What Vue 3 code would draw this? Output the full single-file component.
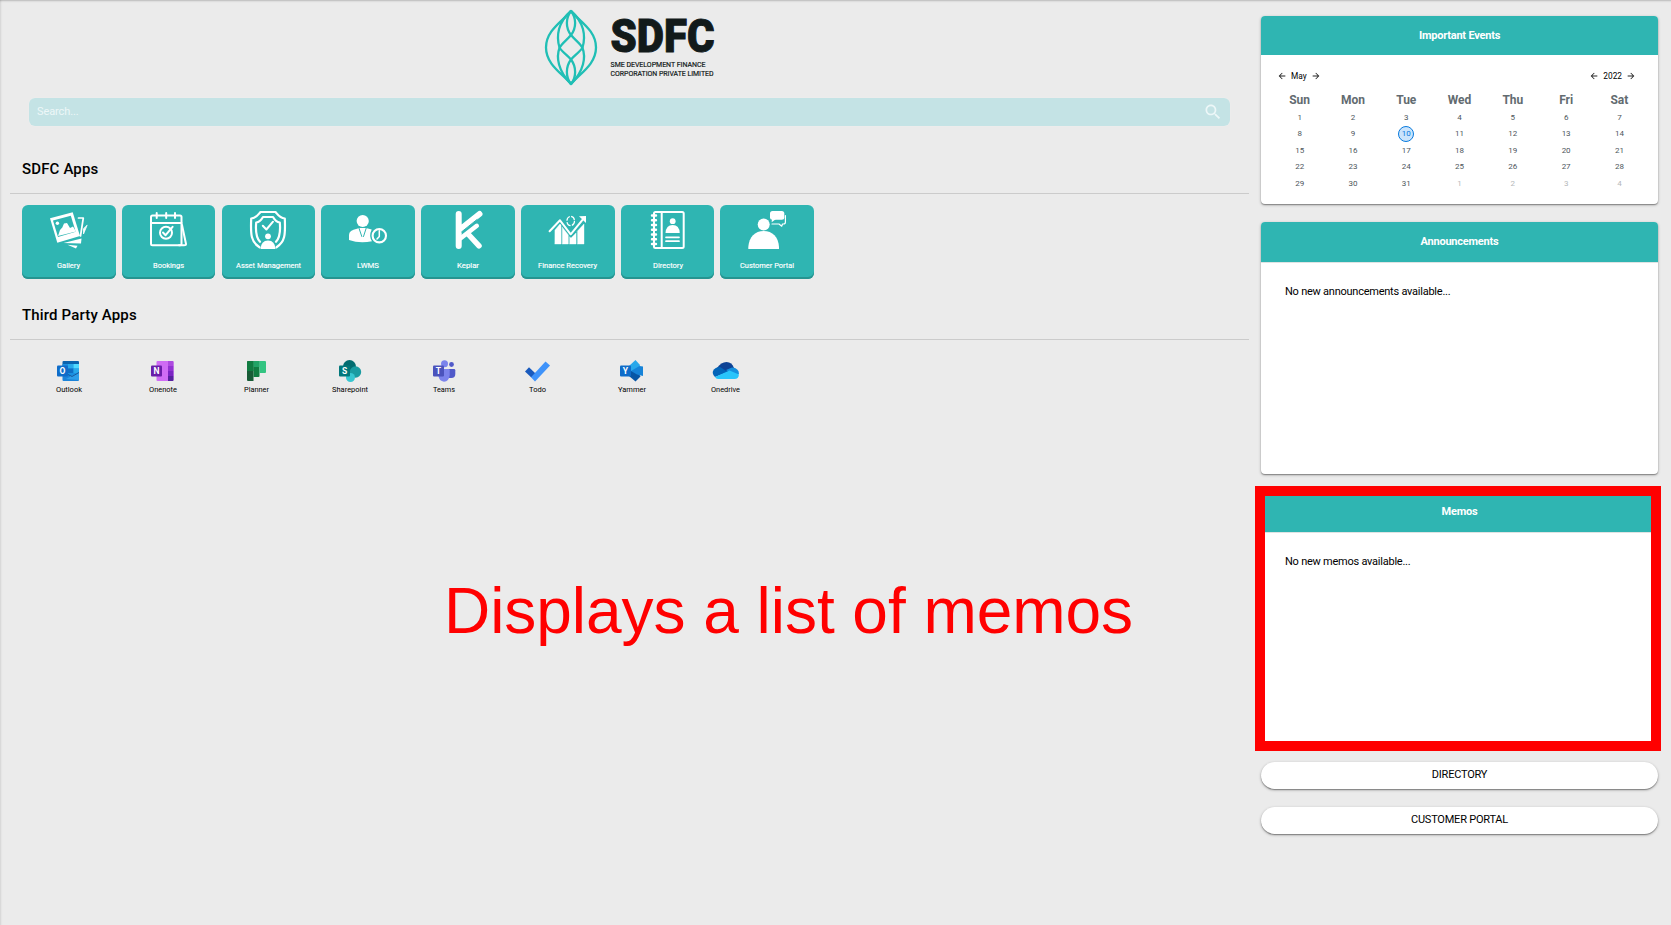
<script setup>
const apps = [
  { name: 'Gallery', w: 23, art: '<path d="M29.500 8H34.300L31.500 26" stroke-width="1.700"/><path d="M38 15.500 34.500 24V19Z" fill="#fff" stroke-width=".8"/><path d="M14.500 33 32.500 28.500 32 33.500Z" fill="#fff" stroke="none"/><path d="M18.500 34.800 28.500 35.800 27 38.600Z" fill="#fff" stroke="none"/><path d="M1 8.300 23.700 2.300 31 26 8.300 32.700Z" fill="#fff" stroke="none"/><path d="M4 10.500 21.800 5.700 26.700 21.800 9 27Z" fill="#2fb5b2" stroke="none"/><circle cx="8.400" cy="13.300" r="1.700" fill="#fff" stroke="none"/><path d="M9 26 11 20 13.300 17.500 15 13.500 18 13 21 18 24 16.500 27 21.500Z" fill="#fff" stroke="none"/>' },
  { name: 'Bookings', w: 31, art: '<rect x="2" y="5.500" width="30.500" height="29.700" rx="1.500"/><path d="M2 13H32.500M7.700 3V8M17.200 3V8M26 3V8M33 15 37 34Q37 35.200 35 35.200H30" /><circle cx="17" cy="22.700" r="6"/><path d="m14 22.500 2.600 2.700 7-8.400"/>' },
  { name: 'Asset Management', w: 65, art: '<path d="M11.500 37.300C3 32 2.500 25 3.200 8.500 8.500 8 9.500 5.500 12.500 2H27.500C30.500 5.500 31.500 8 36.800 8.500 37.500 25 37 32 28.500 37.300" stroke-width="2.200"/><path d="M12 31.800C7.500 27 7.500 20 8.200 12.500 11.500 12 13 10.500 15 7H25C27 10.500 28.500 12 31.800 12.500 32.500 20 32.500 27 28 31.800" stroke-width="2.200"/><path d="m14.800 15.700 3.600 3.800 6.600-7.800"/><circle cx="20" cy="26.300" r="2.900" fill="#fff" stroke="none"/><path d="M12.500 39Q13 30.500 20 30.500T27.500 39Z" fill="#fff" stroke="none"/>' },
  { name: 'LWMS', w: 22, art: '<circle cx="14.700" cy="11" r="6.100" fill="#fff" stroke="none"/><path d="M1 30V25Q1 20 9 18.700L11 18H18L23.700 19.500Q20.500 26 24 31.200 12 34 1 30Z" fill="#fff" stroke="none"/><path d="m11 18.200 2.800 8.300M18.200 18.200l-2.700 8.300" stroke="#2fb5b2" stroke-width="1"/><circle cx="31.300" cy="25.700" r="6.700" stroke-width="2.100"/><path d="M31.300 20.800V26.500L29 29" stroke-width="1.500"/>' },
  { name: 'Keplar', w: 22, art: '<path d="M10.700 4V36M31.500 4 12 19.500" stroke-width="6"/><path d="M28.800 15.800 13 28" stroke-width="4.500"/><path d="M20.500 24.500 31 35.800" stroke-width="5.500"/><path d="M13.700 21.800 29 9.500" stroke="#2fb5b2" stroke-width="1"/>' },
  { name: 'Finance Recovery', w: 59, art: '<path d="M7 20 12 14 13 15V34H7ZM14.300 17.200 20.300 25V34H14.300ZM21.700 27 23 28 28 23V34H21.700ZM29.500 21 36 14V34H29.500Z" fill="#fff" stroke="#fff" stroke-width=".4"/><path d="m1.600 21.300 10.400-11 10.700 14L35.500 8.700" stroke-width="2"/><path d="M31 6.200 38 6v7Z" fill="#fff" stroke="none"/><ellipse cx="22.700" cy="11" rx="3.800" ry="4.600" stroke-width="1.200" stroke-linecap="butt" stroke-dasharray="5.200 1.400"/>' },
  { name: 'Directory', w: 30, art: '<rect x="6" y="2" width="29.700" height="36" rx="1.500"/><path d="M13.700 2V38"/><path d="M4 5.500H8M4 10.200H8M4 15H8M4 19.700H8M4 24.500H8M4 29.200H8M4 34H8" stroke-width="2.400"/><circle cx="24.700" cy="11.200" r="2.900" fill="#fff" stroke="none"/><path d="M17.500 23Q18 15 24.700 15T31.700 23Z" fill="#fff" stroke="none"/><path d="M18 27.300H31M18 31.200H31" stroke-width="1.700"/>' },
  { name: 'Customer Portal', w: 54, art: '<circle cx="16.700" cy="14.600" r="6" fill="#fff" stroke="none"/><path d="M1.300 39V37C2 27 8 21 16.700 21S31.500 27 32 37V39Z" fill="#fff" stroke="none"/><rect x="23" y="1" width="14.300" height="8.800" rx="2.500" fill="#fff" stroke="none"/><path d="M25 8 24.700 12.200 29 9Z" fill="#fff" stroke="none"/><path d="M38.400 5.500V12Q38.400 14 36.500 14H35.500L34.700 16.200 32 14H25" stroke-width="1.200"/>' }
]

const thirdParty = [
  { name: 'Outlook', w: 26, art: '<rect x="5.500" y="1" width="16.500" height="12" rx="1" fill="#0a62ad"/><path d="M5.500 4H22V16H5.500Z" fill="#1a8fe0"/><path d="M11 4h5.500v4.500H11Z" fill="#28a8ea"/><path d="M16.500 4H22v4.500h-5.500Z" fill="#50d9ff"/><path d="M11 8.500h5.500V13H11Z" fill="#0f6fc5"/><path d="M16.500 8.500H22V13h-5.500Z" fill="#28a8ea"/><path d="M5.500 12 14 16.500 22 12V20q0 1-1 1H6.500Q5.500 21 5.500 20Z" fill="#1c83d9"/><path d="M22 12 9 19l13 1Z" fill="#2d9ee9"/><path d="m11 14.500 4 2 7-4" fill="none" stroke="#114a8b" stroke-width=".8"/><rect y="5.500" width="11" height="11" rx="1" fill="#0f6cc9"/>', letter: 'O' },
  { name: 'Onenote', w: 28, art: '<rect x="5.500" y="1" width="17" height="20" rx="1" fill="#cf6cf4"/><path d="M17 1h4.500q1 0 1 1v4H17Z" fill="#ad4be0"/><path d="M17 6h5.500v5H17Z" fill="#9332d2"/><path d="M17 11h5.500v5H17Z" fill="#7b24c4"/><path d="M17 16h5.500v4q0 1-1 1H17Z" fill="#56219f"/><rect y="5.500" width="11" height="11" rx="1" fill="#6a1ea9"/>', letter: 'N' },
  { name: 'Planner', w: 25, art: '<path d="M2 2q0-1 1-1h5.500v20H3q-1 0-1-1Z" fill="#185c37"/><path d="M3 1h5.500v10H2V2Z" fill="#107c41"/><path d="M8.500 1h6V16q0 1-1 1h-5Z" fill="#107c41"/><path d="M8.500 1h6v6h-6Z" fill="#21a366"/><path d="M14.500 1h5.500q1 0 1 1V12q0 1-1 1h-5.500Z" fill="#33c481"/>' },
  { name: 'Sharepoint', w: 36, art: '<circle cx="10.500" cy="6.500" r="6.500" fill="#036c70"/><circle cx="16.500" cy="12" r="5.700" fill="#1a9ba1"/><circle cx="11.500" cy="17.500" r="4.500" fill="#37c6d0"/><rect y="5.500" width="11" height="11" rx="1" fill="#03787c"/>', letter: 'S' },
  { name: 'Teams', w: 22, art: '<circle cx="18.500" cy="4.500" r="2.400" fill="#5059c9"/><path d="M15 9h6q1.300 0 1.300 1.300V14q0 4-4 4H15Z" fill="#5059c9"/><circle cx="11.500" cy="3.700" r="3.500" fill="#7b83eb"/><path d="M6 9H15.500q1.200 0 1.200 1.200V15Q16 21.500 11 21.700 6 21 5.500 16Z" fill="#7b83eb"/><rect y="5.500" width="11" height="11" rx="1" fill="#4b53bc"/>', letter: 'T' },
  { name: 'Todo', w: 17, art: '<path d="m-1 11.500 4-4.200 6.500 6.200-4.200 4Z" fill="#195abd"/><path d="M5 17.200 19.500 1.500 24 5.500 9 21.500Z" fill="#3f93fa"/>' },
  { name: 'Yammer', w: 28, art: '<path d="M9 6 15.500 0 20 5 18 12H9Z" fill="#28a8ea"/><path d="M9 11 17 11 20.500 16.500 15.500 21.500 9 16Z" fill="#0756a5"/><path d="M11 11 19.500 6 23 6.500V16L17 14.500Z" fill="#1683d8"/><rect y="5.500" width="11" height="11" rx="1" fill="#0f6cc9"/>', letter: 'Y' },
  { name: 'Onedrive', w: 29, art: '<path d="M3 8Q7 2 12.500 2 18 2 20 8L12 14Z" fill="#0d4295"/><path d="M1 17Q-2 14-1 11 1 7 6 7L14 12Z" fill="#0364b8"/><path d="M12 10 18 7.500Q25 8 25 14L20 16Z" fill="#1490df"/><path d="M1 17 15.500 10.500 25 14.500Q24.500 19 20.500 19H4Q2 19 1 17Z" fill="#28c5fb"/>' }
]

const weekdays = ['Sun', 'Mon', 'Tue', 'Wed', 'Thu', 'Fri', 'Sat']
const days = Array.from({ length: 35 }, (_, i) => ({
  label: i < 31 ? i + 1 : i - 30,
  muted: i > 30,
  today: i === 9
}))
</script>

<template>
  <div class="page">
    <main class="main">
      <svg class="logo" width="176" height="80" viewBox="0 0 176 80">
        <g fill="none" stroke="#20bfb5" stroke-width="2.300" stroke-linejoin="round">
          <path d="M27 2C19 12 2 21 2 38.500S19 65 27 75C35 65 52 56 52 38.500S35 12 27 2Z" />
          <path d="M27 2C21.500 9 21.500 19 27 26 31 31 36 34 38.500 39 42 48 40 62 27 75" />
          <path d="M27 2C32.500 9 32.500 19 27 26 23 31 18 34 15.500 39 12 48 14 62 27 75" />
          <path d="M27 2C14 13 12 27 15.500 38.500 18 43 23 46 27 50.500 32.500 58 32.500 68 27 75" />
          <path d="M27 2C40 13 42 27 38.500 38.500 36 43 31 46 27 50.500 21.500 58 21.500 68 27 75" />
        </g>
        <g fill="#121a1a">
          <text class="brand" x="66.500" y="43" textLength="104" lengthAdjust="spacingAndGlyphs">SDFC</text>
          <text class="brand-sub" x="66.500" y="57.500" textLength="95" lengthAdjust="spacingAndGlyphs">SME DEVELOPMENT FINANCE</text>
          <text class="brand-sub" x="66.500" y="66.500" textLength="103" lengthAdjust="spacingAndGlyphs">CORPORATION PRIVATE LIMITED</text>
        </g>
      </svg>

      <div class="search">
        <span>Search...</span>
        <svg width="20" height="20" viewBox="0 0 24 24"><path fill="#edf7f8" d="M15.500 14h-.79l-.28-.27C15.410 12.590 16 11.110 16 9.500 16 5.910 13.090 3 9.500 3S3 5.910 3 9.500 5.910 16 9.500 16c1.610 0 3.090-.59 4.230-1.570l.27.28v.79l5 4.990L20.490 19l-4.990-5zm-6 0C7.010 14 5 11.990 5 9.500S7.010 5 9.500 5 14 7.010 14 9.500 11.990 14 9.500 14z" /></svg>
      </div>

      <h2 class="title">SDFC Apps</h2>
      <div class="tiles">
        <div v-for="app in apps" :key="app.name" class="tile">
          <svg width="40" height="40" viewBox="0 0 40 40" fill="none" stroke="#fff" stroke-width="2" stroke-linecap="round" stroke-linejoin="round" v-html="app.art" />
          <svg class="label" :width="app.w" height="12"><text x="0" y="9" :textLength="app.w" lengthAdjust="spacingAndGlyphs">{{ app.name }}</text></svg>
        </div>
      </div>

      <h2 class="title third">Third Party Apps</h2>
      <div class="links">
        <div v-for="app in thirdParty" :key="app.name" class="link">
          <svg class="glyph" width="23" height="22" viewBox="0 0 23 22">
            <g v-html="app.art" />
            <text v-if="app.letter" class="letter" x="5.500" y="14" text-anchor="middle">{{ app.letter }}</text>
          </svg>
          <svg class="label" :width="app.w" height="11"><text x="0" y="8.500" :textLength="app.w" lengthAdjust="spacingAndGlyphs">{{ app.name }}</text></svg>
        </div>
      </div>
    </main>

    <aside class="side">
      <section class="card calendar">
        <header>Important Events</header>
        <div class="switchers">
          <div v-for="label in ['May', '2022']" :key="label" class="switcher">
            <svg width="10" height="10" viewBox="0 0 24 24"><path d="M20 11H7.830l5.590-5.590L12 4l-8 8 8 8 1.410-1.410L7.830 13H20v-2z" /></svg>
            <span>{{ label }}</span>
            <svg width="10" height="10" viewBox="0 0 24 24"><path d="m12 4-1.410 1.410L16.170 11H4v2h12.170l-5.580 5.590L12 20l8-8z" /></svg>
          </div>
        </div>
        <div class="weekdays"><span v-for="day in weekdays" :key="day">{{ day }}</span></div>
        <div class="days">
          <span v-for="(day, i) in days" :key="i" :class="{ muted: day.muted }"><b :class="{ today: day.today }">{{ day.label }}</b></span>
        </div>
      </section>

      <section class="card notice">
        <header>Announcements</header>
        <p>No new announcements available...</p>
      </section>

      <section class="card notice memos">
        <header>Memos</header>
        <p>No new memos available...</p>
        <div class="highlight" />
      </section>

      <button class="pill">DIRECTORY</button>
      <button class="pill">CUSTOMER PORTAL</button>
    </aside>

    <div class="callout">Displays a list of memos</div>
  </div>
</template>

<style>
body { background: #ebebeb; overflow: hidden; }
</style>

<style scoped>
.page {
  position: relative;
  display: flex;
  box-sizing: border-box;
  width: 1671px;
  height: 925px;
  overflow: hidden;
  background: #ebebeb;
  box-shadow: inset 0 3px 2px -2px rgba(0, 0, 0, .22), inset 3px 0 2px -2px rgba(0, 0, 0, .1);
  font-family: Roboto, "Liberation Sans", sans-serif;
  color: #000;
}
.main { width: 1239px; padding: 9px 0 0 10px; display: flex; flex-direction: column; }
.logo { display: block; margin-left: 534px; flex: none; overflow: visible; }
.brand { font: 900 46px Roboto, sans-serif; stroke: #121a1a; stroke-width: 1px; }
.brand-sub { font: 400 7.800px Roboto, sans-serif; stroke: #121a1a; stroke-width: .2px; }
.search {
  display: flex;
  align-items: center;
  justify-content: space-between;
  box-sizing: border-box;
  height: 28px;
  margin: 9px 19px 0;
  padding: 0 7px 2px 8px;
  border-radius: 6px;
  background: #c4e3e5;
  box-shadow: 0 0 1px rgba(255, 255, 255, .6);
  color: #edf7f8;
  font-size: 11px;
  letter-spacing: -.1px;
}
.search svg { display: block; position: relative; top: 1px; }
.title {
  box-sizing: border-box;
  height: 68px;
  margin: 0;
  padding: 33px 0 0 12px;
  border-bottom: 1px solid #cbcbcb;
  font-size: 15px;
  font-weight: 500;
  line-height: 20px;
  letter-spacing: .15px;
}
.third { height: 61px; padding-top: 26px; }
.tiles { display: grid; grid-template-columns: repeat(8, 93.700px); gap: 6.100px; padding: 11px 0 0 12px; }
.tile {
  display: flex;
  flex-direction: column;
  align-items: center;
  box-sizing: border-box;
  height: 74px;
  padding-top: 5px;
  border-radius: 6px;
  background: #2fb5b2;
  box-shadow: inset 0 -2px 0 #269490;
}
.label { display: block; font-size: 8px; overflow: visible; }
.tile .label { margin-top: 9px; fill: #fff; stroke: #fff; stroke-width: .15px; }
.links { display: grid; grid-template-columns: repeat(8, 93.800px); padding: 20px 0 0 12px; }
.link { display: flex; flex-direction: column; align-items: center; }
.glyph { display: block; overflow: visible; }
.letter { font: 700 8.500px Roboto, sans-serif; fill: #fff; }
.link .label { margin-top: 1px; }
.side { display: flex; flex-direction: column; width: 397px; margin-left: 12px; padding-top: 16px; }
.card {
  position: relative;
  box-sizing: border-box;
  flex: none;
  margin-bottom: 18px;
  border-radius: 4px;
  background: #fff;
  box-shadow: 0 1px 3px rgba(0, 0, 0, .3), 0 1px 1px rgba(0, 0, 0, .28);
}
.card header {
  height: 39px;
  border-radius: 4px 4px 0 0;
  background: #2fb5b2;
  color: #fff;
  font-size: 11px;
  font-weight: 700;
  line-height: 39px;
  letter-spacing: -.22px;
  text-align: center;
}
.calendar { height: 188px; }
.switchers { display: flex; justify-content: space-between; padding: 15px 22px 0 16px; }
.switcher { display: flex; align-items: center; gap: 4px; height: 12px; font-size: 8.300px; }
.switcher svg { fill: #222; display: block; }
.weekdays, .days { display: grid; grid-template-columns: repeat(7, 53.300px); margin-left: 12px; text-align: center; }
.weekdays { height: 16px; margin-top: 10px; color: #626b70; font-size: 12px; font-weight: 700; line-height: 16px; }
.days { grid-auto-rows: 16.500px; margin-top: 1px; color: #4d565b; font-size: 8px; }
.days span { display: flex; align-items: center; justify-content: center; }
.days b { font-weight: 400; }
.days .muted { color: #b5b8ba; }
.days .today {
  box-sizing: border-box;
  width: 16px;
  height: 16px;
  border: 1px solid #087add;
  border-radius: 50%;
  background: #cbe4fc;
  color: #0879dd;
  line-height: 14px;
}
.notice { height: 252px; }
.notice header { box-sizing: border-box; height: 41px; border-bottom: 1px solid #dfe3e3; }
.notice p { margin: 0; padding: 20px 24px; font-size: 11px; line-height: 18px; letter-spacing: -.24px; }
.highlight { position: absolute; left: -6px; top: -6px; width: 386px; height: 245px; border: 10px solid #f00; }
.pill {
  box-sizing: border-box;
  flex: none;
  height: 27px;
  margin: 0 0 18px;
  padding: 0 0 2px;
  border: 0;
  border-radius: 14px;
  background: #fff;
  box-shadow: 0 1px 3px rgba(0, 0, 0, .3), 0 1px 1px rgba(0, 0, 0, .3);
  color: #000;
  font: 400 11px Roboto, sans-serif;
  letter-spacing: -.22px;
}
.callout {
  position: absolute;
  left: 444px;
  top: 574px;
  color: #f00;
  font: 64px/74px "Liberation Sans", Arial, sans-serif;
  letter-spacing: -.04px;
  white-space: nowrap;
}
</style>
